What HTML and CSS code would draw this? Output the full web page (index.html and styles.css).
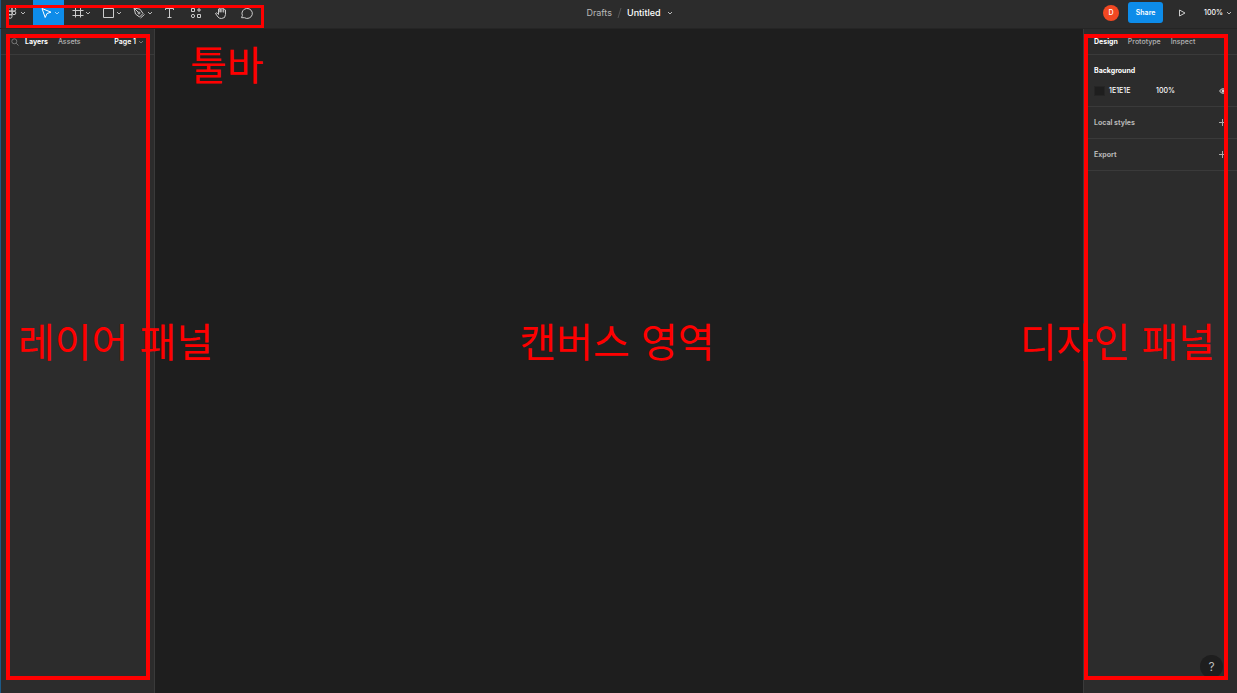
FILE: index.html
```html
<!DOCTYPE html>
<html lang="ko">
<head>
<meta charset="utf-8">
<title>Untitled</title>
<link rel="stylesheet" href="styles.css">
</head>
<body>
<svg class="defs" aria-hidden="true">
  <symbol id="chev" viewBox="0 0 6 4"><path d="M1 1l2 2 2-2"/></symbol>
  <symbol id="plus" viewBox="0 0 8 8"><path d="M3.500 0v7M0 3.500h7"/></symbol>
</svg>
<div class="app">
  <header class="topbar">
    <nav class="tools" aria-label="툴바">
      <button class="tool menu" aria-label="Menu">
        <svg class="icon" viewBox="0 0 14 14"><path d="M7 1.500H5.200a1.800 1.800 0 0 0 0 3.600H7zM7 1.500h2a1.800 1.800 0 0 1 0 3.600H7zM7 5.100H5.200a1.800 1.800 0 0 0 0 3.600H7zM7 8.700H5.200A1.800 1.800 0 1 0 7 10.500z"/><circle cx="9" cy="6.900" r="1.800"/></svg>
        <svg class="chev"><use href="#chev"/></svg>
      </button>
      <button class="tool active" aria-label="Move">
        <svg class="icon" viewBox="0 0 14 14"><path d="M3 2.500l9 3.700-4 1.300L6.200 11.500z"/></svg>
        <svg class="chev"><use href="#chev"/></svg>
      </button>
      <button class="tool" aria-label="Frame">
        <svg class="icon" viewBox="0 0 14 14"><path d="M5.500 1.500v10M10.500 1.500v10M2.500 4.500h11M2.500 9.500h11"/></svg>
        <svg class="chev"><use href="#chev"/></svg>
      </button>
      <button class="tool" aria-label="Rectangle">
        <svg class="icon" viewBox="0 0 14 14"><path d="M2.500 2.500h10v9h-10z"/></svg>
        <svg class="chev"><use href="#chev"/></svg>
      </button>
      <button class="tool pen" aria-label="Pen">
        <svg class="icon" viewBox="0 0 14 14"><path d="M2 2l6 1.200 3 4.300-3.500 3.500-4-3zM2 2l4.300 4.300M12.500 8.500l-4 3.500"/><circle cx="7" cy="7" r="1"/></svg>
        <svg class="chev"><use href="#chev"/></svg>
      </button>
      <button class="tool single" aria-label="Text">
        <svg class="icon" viewBox="0 0 14 14"><path d="M3.500 4V2.500h8V4M7.500 2.500v9M5.500 11.500h4"/></svg>
      </button>
      <button class="tool single" aria-label="Resources">
        <svg class="icon" viewBox="0 0 14 14"><path d="M3.500 2.500h3v3h-3zM9.500 8.500h3v3h-3zM11 2v4M9 4h4"/><circle cx="5" cy="10" r="1.600"/></svg>
      </button>
      <button class="tool single" aria-label="Hand">
        <svg class="icon" viewBox="0 0 14 14"><path d="M4.500 8.500V3q.8-1 1.600 0v3.500M6.100 6V1.800q.9-1 1.800 0v4.500M7.900 2.500q.9-1 1.800 0v4M9.700 4q.9-1 1.800 0v4.500Q11.500 12.500 7.500 12.500q-2.500 0-3.500-1.500L1.500 7.500q.6-1.200 1.800-.2l1.200 1.200"/></svg>
      </button>
      <button class="tool single" aria-label="Comment">
        <svg class="icon" viewBox="0 0 14 14"><path d="M1.500 11.700l.9-2.200a5.200 5 0 1 1 2 2.200z"/></svg>
      </button>
      <span class="mark"></span>
    </nav>
    <div class="file">
      <a href="#" class="folder">Drafts</a>
      <svg class="slash" viewBox="0 0 5 12"><path d="M1 11L4 1"/></svg>
      <button class="name">Untitled <svg class="chev"><use href="#chev"/></svg></button>
    </div>
    <div class="actions">
      <span class="avatar">D</span>
      <button class="share">Share</button>
      <button class="play" aria-label="Present"><svg viewBox="0 0 8 8"><path d="M1.500 1l5.500 3-5.500 3z"/></svg></button>
      <button class="zoom">100% <svg class="chev"><use href="#chev"/></svg></button>
    </div>
  </header>

  <aside class="panel layers">
    <div class="tabs">
      <svg class="search" viewBox="0 0 8 8"><circle cx="3.300" cy="3.300" r="2.500"/><path d="M5.200 5.200L7.500 7.500"/></svg>
      <button class="tab on">Layers</button>
      <button class="tab">Assets</button>
      <button class="tab on page">Page 1 <svg class="chev"><use href="#chev"/></svg></button>
    </div>
    <span class="mark"></span>
    <span class="label">레이어 패널</span>
  </aside>

  <main class="canvas">
    <span class="label toolbar-label">툴바</span>
    <span class="label">캔버스 영역</span>
  </main>

  <aside class="panel design">
    <div class="tabs">
      <button class="tab on">Design</button>
      <button class="tab">Prototype</button>
      <button class="tab">Inspect</button>
    </div>
    <section class="background">
      <h2>Background</h2>
      <div class="fill">
        <span class="swatch"></span>
        <span class="hex">1E1E1E</span>
        <span>100%</span>
        <button class="end" aria-label="Toggle visibility"><svg viewBox="0 0 8 8"><path d="M.5 4Q4-.5 7.500 4 4 8.500.5 4z"/><circle class="pupil" cx="4" cy="4" r="1"/></svg></button>
      </div>
    </section>
    <section class="row"><h2>Local styles</h2><button class="end" aria-label="Add style"><svg><use href="#plus"/></svg></button></section>
    <section class="row"><h2>Export</h2><button class="end" aria-label="Add export"><svg><use href="#plus"/></svg></button></section>
    <button class="help">?</button>
    <span class="mark"></span>
    <span class="label">디자인 패널</span>
  </aside>
</div>
</body>
</html>
```

FILE: styles.css
```css
* { box-sizing: border-box; }
body { margin: 0; background: #1e1e1e; color: #fff; font: 500 7px/12px Inter, "Noto Sans CJK KR", sans-serif; }
button { margin: 0; padding: 0; border: 0; background: none; color: inherit; font: inherit; }
a { color: inherit; text-decoration: none; }
h2 { margin: 0; font-size: 7px; font-weight: 700; line-height: 12px; }
svg { display: block; flex: none; fill: none; stroke: currentColor; }
.defs { position: absolute; width: 0; height: 0; }

.app {
  display: grid;
  grid-template: auto 1fr / 155px 1fr 154px;
  min-height: 100vh;
  overflow: hidden;
}
.chev { width: 6px; height: 4px; stroke: #bbb; }

.topbar {
  grid-column: 1 / -1;
  display: grid;
  grid-template-columns: 1fr auto 1fr;
  background: #2c2c2c;
  border-bottom: 1px solid #252525;
  height: 29px;
}
.tools { position: relative; display: flex; justify-self: start; padding-left: 2px; border-left: 1px solid #1c5a88; padding-bottom: 2px; }
.tool { display: flex; align-items: center; justify-content: center; gap: 1px; width: 31px; padding-left: 2px; color: #ccc; }
.tool .icon { width: 14px; height: 14px; }
.menu { width: 30px; justify-content: flex-start; }
.active { background: #0d8ce9; color: #fff; }
.active .chev { stroke: #9fd0f7; }
.pen { width: 30px; }
.single { width: 26px; padding: 0; }
.tools .mark { top: 5px; right: -4px; bottom: 0; left: 5px; border-width: 3px; }

.file { display: flex; align-items: center; gap: 5px; padding: 0 0 3px 22px; font-size: 9px; }
.folder { color: #b8b8b8; font-weight: 400; }
.slash { width: 5px; height: 12px; stroke: #555; }
.name { display: flex; align-items: center; gap: 6px; }

.actions { display: flex; align-items: center; justify-self: end; padding: 0 5px 3px 0; }
.avatar { width: 16px; height: 16px; margin-right: 9px; border-radius: 50%; background: #f24822; line-height: 16px; text-align: center; }
.share { width: 35px; height: 21px; border-radius: 3px; background: #0d8ce9; font-weight: 600; }
.play { margin: 0 18px 0 15px; color: #ccc; }
.play svg { width: 8px; height: 8px; }
.zoom { display: flex; align-items: center; gap: 3px; }

.panel { position: relative; background: #2c2c2c; }
.layers { border-left: 1px solid #1c5a88; border-right: 1px solid #3a3a3a; }
.design { border-left: 1px solid #3a3a3a; }
.tabs { display: flex; align-items: center; gap: 10px; height: 26px; padding: 0 10px; border-bottom: 1px solid #3a3a3a; }
.tab { color: #b3b3b3; }
.on { color: #fff; font-weight: 700; }
.search { width: 8px; height: 8px; margin-right: -4px; stroke: #777; }
.page { display: flex; align-items: center; gap: 2px; margin-left: auto; font-weight: 600; }
.page .chev { stroke: #777; }

.background { padding: 10px 10px 9px; border-bottom: 1px solid #3a3a3a; }
.fill { display: flex; align-items: center; margin-top: 8px; height: 12px; }
.swatch { width: 11px; height: 10px; margin-right: 4px; border: 1px solid #252525; background: #1e1e1e; }
.hex { width: 47px; }
.end { margin-left: auto; color: #aaa; }
.end svg { width: 8px; height: 8px; }
.fill .end { color: #ddd; }
.pupil { fill: currentColor; }
.row { display: flex; align-items: center; height: 32px; padding: 0 10px; border-bottom: 1px solid #3a3a3a; color: #b8b8b8; }
.help { position: absolute; right: 14px; bottom: 15px; width: 23px; height: 23px; border-radius: 50%; background: #1e1e1e; color: #bbb; font-size: 12px; font-weight: 400; }

.canvas { position: relative; }
.mark { position: absolute; z-index: 2; border: 4px solid #f00; pointer-events: none; }
.panel .mark { top: 5px; bottom: 13px; }
.layers .mark { left: 5px; right: 4px; }
.design .mark { left: 0; right: 9px; }
.label {
  position: absolute;
  z-index: 3;
  top: 47%;
  left: 50%;
  transform: translate(-51%, -52%);
  color: #f00;
  font: 400 40px/48px "Noto Sans CJK KR", sans-serif;
  white-space: nowrap;
}
.layers .label { left: 17px; transform: translateY(-52%); }
.design .label { left: auto; right: 22px; transform: translateY(-52%); }
.toolbar-label.label { top: 35px; left: 35px; transform: translateY(-52%); }
```
